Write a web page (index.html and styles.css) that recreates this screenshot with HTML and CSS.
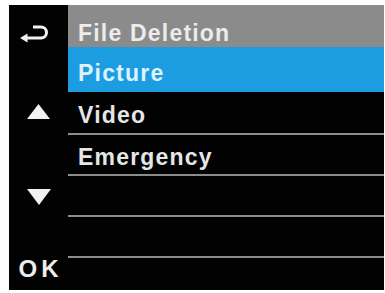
FILE: index.html
```html
<!DOCTYPE html>
<html>
<head>
<meta charset="utf-8">
<link rel="stylesheet" href="styles.css">
</head>
<body>
<div class="screen">
  <div class="side side-back">
    <svg width="28" height="20" viewBox="0 0 28 20">
      <path d="M13 4 H21 A5.5 5.5 0 0 1 21 15 H6" fill="none" stroke="#f2f2f2" stroke-width="3"/>
      <polygon points="0,15 7.5,10.5 7.5,19.5" fill="#f2f2f2"/>
    </svg>
  </div>
  <div class="item item-title">File Deletion</div>
  <div class="side"></div>
  <div class="item item-active">Picture</div>
  <div class="side side-up">
    <svg width="23" height="15" viewBox="0 0 23 15"><polygon points="11.5,0 23,15 0,15" fill="#f2f2f2"/></svg>
  </div>
  <div class="item item-line">Video</div>
  <div class="side"></div>
  <div class="item item-line">Emergency</div>
  <div class="side side-down">
    <svg width="24" height="16" viewBox="0 0 24 16"><polygon points="0,0 24,0 12,16" fill="#f2f2f2"/></svg>
  </div>
  <div class="item item-line"></div>
  <div class="side"></div>
  <div class="item item-line"></div>
  <div class="side side-ok"><span class="ok">OK</span></div>
  <div class="item"></div>
</div>
</body>
</html>
```

FILE: styles.css
```css
html, body {
  margin: 0;
  padding: 0;
  background: #ffffff;
}
body {
  padding: 5px 0 0 9px;
  font-family: "Liberation Sans", Arial, sans-serif;
}
.screen {
  width: 375px;
  height: 285px;
  background: #020202;
  display: grid;
  grid-template-columns: 59px 1fr;
  grid-template-rows: 42px 45px 43px 41px 41px 41px 32px;
}
.side {
  display: flex;
  align-items: center;
  justify-content: center;
}
.side-back {
  justify-content: flex-start;
  align-items: flex-start;
  padding: 18px 0 0 11px;
}
.side-up {
  padding-bottom: 4px;
}
.side-ok {
  padding-bottom: 10px;
}
.ok {
  color: #ededed;
  font-size: 24px;
  font-weight: bold;
  letter-spacing: 4px;
  margin-right: -4px;
  line-height: 1;
}
.item {
  box-sizing: border-box;
  display: flex;
  align-items: center;
  padding: 6px 0 0 10px;
  font-size: 23px;
  font-weight: bold;
  letter-spacing: 1.2px;
  color: #e6e6e6;
  line-height: 1;
}
.item-title {
  background: #8b8b8b;
  color: #ececec;
  padding-top: 14px;
}
.item-active {
  background: #1c9de2;
  color: #dff2ff;
  padding-top: 8px;
}
.item-line {
  border-bottom: 2px solid #8c8c8c;
}
```
